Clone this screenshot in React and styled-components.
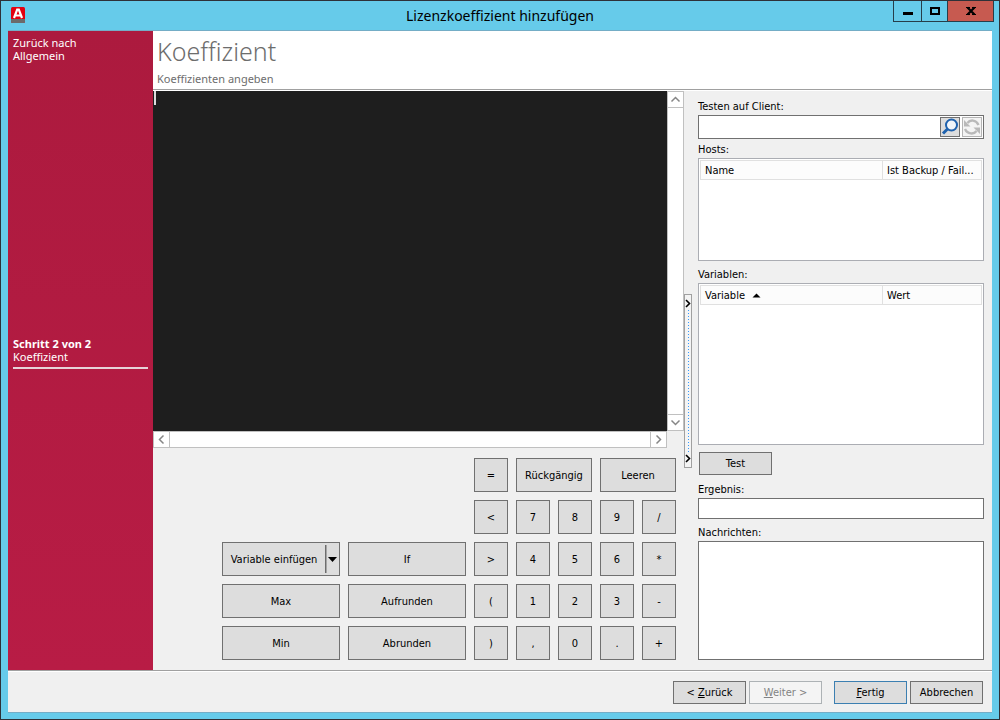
import React, { useState } from "react";
import styled, { createGlobalStyle, css } from "styled-components";

const keys = [
  { label: "=", col: 3, row: 1 },
  { label: "Rückgängig", col: 4, row: 1, span: 2 },
  { label: "Leeren", col: 6, row: 1, span: 2 },
  { label: "<", col: 3, row: 2 },
  { label: "7", col: 4, row: 2 },
  { label: "8", col: 5, row: 2 },
  { label: "9", col: 6, row: 2 },
  { label: "/", col: 7, row: 2 },
  { label: "If", col: 2, row: 3 },
  { label: ">", col: 3, row: 3 },
  { label: "4", col: 4, row: 3 },
  { label: "5", col: 5, row: 3 },
  { label: "6", col: 6, row: 3 },
  { label: "*", col: 7, row: 3 },
  { label: "Max", col: 1, row: 4 },
  { label: "Aufrunden", col: 2, row: 4 },
  { label: "(", col: 3, row: 4 },
  { label: "1", col: 4, row: 4 },
  { label: "2", col: 5, row: 4 },
  { label: "3", col: 6, row: 4 },
  { label: "-", col: 7, row: 4 },
  { label: "Min", col: 1, row: 5 },
  { label: "Abrunden", col: 2, row: 5 },
  { label: ")", col: 3, row: 5 },
  { label: ",", col: 4, row: 5 },
  { label: "0", col: 5, row: 5 },
  { label: ".", col: 6, row: 5 },
  { label: "+", col: 7, row: 5 },
];

const arrows = {
  up: "M4.5 10.5 L8.5 6.5 L12.5 10.5",
  down: "M4.5 6.5 L8.5 10.5 L12.5 6.5",
  left: "M10.5 4.5 L6.5 8.5 L10.5 12.5",
  right: "M6.5 4.5 L10.5 8.5 L6.5 12.5",
};

const Arrow = ({ dir }) => (
  <svg width="17" height="17" viewBox="0 0 17 17">
    <path d={arrows[dir]} fill="none" stroke="#868686" strokeWidth="1.5" />
  </svg>
);

const SplitArrow = () => (
  <svg width="6" height="9" viewBox="0 0 6 9">
    <path d="M1 1 L4.5 4.5 L1 8" fill="none" stroke="#000" strokeWidth="1.6" />
  </svg>
);

const App = () => {
  const [formula, setFormula] = useState("");
  const [client, setClient] = useState("");

  return (
    <>
      <GlobalStyle />
      <Window>
        <TitleBar>
          <Logo width="14" height="16" viewBox="0 0 14 16">
            <rect width="14" height="16" rx="1.5" fill="#e3000f" />
            <path d="M0 12h14v2.5a1.5 1.5 0 0 1-1.5 1.5h-11A1.5 1.5 0 0 1 0 14.5z" fill="#6b6b6b" />
            <path d="M3 11 L6.2 2.5 H7.8 L11 11 M4.3 8.5 H9.7" fill="none" stroke="#fff" strokeWidth="2.2" />
          </Logo>
          <Title>Lizenzkoeffizient hinzufügen</Title>
          <WindowButtons>
            <WindowButton $width={29} aria-label="Minimieren">
              <svg width="10" height="10" viewBox="0 0 10 10">
                <path d="M0 6h10v3H0z" />
              </svg>
            </WindowButton>
            <WindowButton $width={27} aria-label="Maximieren">
              <svg width="10" height="10" viewBox="0 0 10 10">
                <path d="M1 2h8v6H1z" fill="none" stroke="#000" strokeWidth="2" />
              </svg>
            </WindowButton>
            <WindowButton $width={47} $close aria-label="Schließen">
              <svg width="10" height="10" viewBox="0 0 10 10">
                <path d="M1.5 1.5 L8.5 8.500 M8.5 1.5 L1.5 8.500" fill="none" stroke="#000" strokeWidth="2.2" />
                <path d="M0 1.5h4M6 1.5h4M0 8.500h4M6 8.500h4" stroke="#000" strokeWidth="1" />
              </svg>
            </WindowButton>
          </WindowButtons>
        </TitleBar>

        <Dialog>
          <Body>
            <Sidebar>
              <BackLink href="#allgemein">
                Zurück nach
                <br />
                Allgemein
              </BackLink>
              <Step>
                <strong>Schritt 2 von 2</strong>
                <span>Koeffizient</span>
              </Step>
            </Sidebar>

            <Main>
              <Header>
                <h1>Koeffizient</h1>
                <p>Koeffizienten angeben</p>
              </Header>

              <Workspace>
                <Left>
                  <EditorRow>
                    <EditorBox>
                      <Editor
                        aria-label="Koeffizient"
                        value={formula}
                        onChange={(e) => setFormula(e.target.value)}
                      />
                      <Caret />
                    </EditorBox>
                    <VScroll>
                      <ScrollButton aria-label="Nach oben">
                        <Arrow dir="up" />
                      </ScrollButton>
                      <ScrollButton aria-label="Nach unten">
                        <Arrow dir="down" />
                      </ScrollButton>
                    </VScroll>
                  </EditorRow>
                  <HScroll>
                    <ScrollButton aria-label="Nach links">
                      <Arrow dir="left" />
                    </ScrollButton>
                    <ScrollButton aria-label="Nach rechts">
                      <Arrow dir="right" />
                    </ScrollButton>
                  </HScroll>

                  <Keypad>
                    <SplitKey $col={1} $row={3}>
                      <span>Variable einfügen</span>
                      <svg width="14" height="28" viewBox="0 0 14 28">
                        <path d="M0.5 0v28" stroke="#6d6d6d" />
                        <path d="M1.5 0v28" stroke="#a5a5a5" />
                        <path d="M3 12h9l-4.5 5z" />
                      </svg>
                    </SplitKey>
                    {keys.map((key) => (
                      <Key
                        key={key.label}
                        $col={key.col}
                        $row={key.row}
                        $span={key.span}
                      >
                        {key.label}
                      </Key>
                    ))}
                  </Keypad>
                </Left>

                <Splitter>
                  <SplitArrow />
                  <Dots />
                  <SplitArrow />
                </Splitter>

                <Right>
                  <Label htmlFor="client">Testen auf Client:</Label>
                  <SearchBox>
                    <input
                      id="client"
                      value={client}
                      onChange={(e) => setClient(e.target.value)}
                    />
                    <IconButton aria-label="Suchen">
                      <svg width="18" height="18" viewBox="0 0 18 18">
                        <circle cx="10.5" cy="7" r="5.5" fill="#f2f6fa" stroke="#1f62ae" strokeWidth="2" />
                        <path d="M6.5 11 L2 15.5" stroke="#1f62ae" strokeWidth="3" />
                      </svg>
                    </IconButton>
                    <IconButton aria-label="Aktualisieren" disabled>
                      <svg width="18" height="18" viewBox="0 0 18 18">
                        <g fill="none" stroke="#b9b9b9" strokeWidth="2.4">
                          <path d="M4.5 5 C7 1.5 13 1.5 15.5 7" />
                          <path d="M2 11 C4.5 16.5 11 16.5 13.5 13" />
                        </g>
                        <path d="M1 2v6.500h6.500zM17 16V9.500h-6.500z" fill="#b9b9b9" />
                      </svg>
                    </IconButton>
                  </SearchBox>

                  <Label as="div" id="hosts">Hosts:</Label>
                  <ListBox $height={103}>
                    <Table aria-labelledby="hosts">
                      <thead>
                        <tr>
                          <th>Name</th>
                          <th>Ist Backup / Fail...</th>
                        </tr>
                      </thead>
                    </Table>
                  </ListBox>

                  <Label as="div" id="variablen" $gap={3}>Variablen:</Label>
                  <ListBox $grow>
                    <Table aria-labelledby="variablen">
                      <thead>
                        <tr>
                          <th>
                            Variable
                            <svg width="9" height="5" viewBox="0 0 9 5">
                              <path d="M0.5 4.500 L4.500 0.5 L8.500 4.500z" />
                            </svg>
                          </th>
                          <th>Wert</th>
                        </tr>
                      </thead>
                    </Table>
                  </ListBox>

                  <TestButton>Test</TestButton>

                  <Label htmlFor="ergebnis" $gap={4}>Ergebnis:</Label>
                  <Result id="ergebnis" readOnly />

                  <Label htmlFor="nachrichten" $gap={3}>Nachrichten:</Label>
                  <Messages id="nachrichten" readOnly />
                </Right>
              </Workspace>
            </Main>
          </Body>

          <Footer>
            <Button>
              &lt;&nbsp;<u>Z</u>urück
            </Button>
            <Button disabled>
              <u>W</u>eiter&nbsp;&gt;
            </Button>
            <FinishButton>
              <u>F</u>ertig
            </FinishButton>
            <Button>Abbrechen</Button>
          </Footer>
        </Dialog>
      </Window>
    </>
  );
};

const uiFont = `"DejaVu Sans Condensed", "DejaVu Sans", Tahoma, sans-serif`;
const headFont = `"Noto Sans", "Segoe UI", sans-serif`;

const GlobalStyle = createGlobalStyle`
  * {
    box-sizing: border-box;
  }

  body {
    margin: 0;
    font: 11px/13px ${uiFont};
    color: #000;
  }

  button, input, textarea {
    margin: 0;
    padding: 0;
    border-radius: 0;
    font: inherit;
    color: inherit;
    outline: none;
  }

  svg {
    display: block;
    flex: none;
  }
`;

const Window = styled.div`
  display: flex;
  flex-direction: column;
  min-height: 100vh;
  padding: 0 7px 6px;
  border: 1px solid #2e3138;
  background: #66cbea;
`;

const TitleBar = styled.header`
  display: grid;
  grid-template-columns: 1fr auto 1fr;
  height: 29px;
  margin: 0 -2px;
`;

const Logo = styled.svg`
  margin: 6px 0 0 5px;
`;

const Title = styled.div`
  font: 14px/29px ${headFont};
`;

const WindowButtons = styled.div`
  display: flex;
  justify-self: end;
  height: 21px;
`;

const WindowButton = styled.button`
  display: flex;
  align-items: center;
  justify-content: center;
  width: ${(p) => p.$width}px;
  border: 1px solid #263e4a;
  border-top: 0;
  background: ${(p) => (p.$close ? "#c75a50" : "transparent")};

  & + & {
    margin-left: -1px;
  }
`;

const Dialog = styled.div`
  display: flex;
  flex-direction: column;
  flex: 1;
  border-top: 1px solid #74adc6;
  border-bottom: 1px solid #74adc6;
  background: #f0f0f0;
`;

const Body = styled.div`
  display: flex;
  flex: 1;
`;

const Sidebar = styled.nav`
  display: flex;
  flex-direction: column;
  width: 145px;
  padding: 5px 5px 26px;
  background: linear-gradient(#ac1a3e, #b81c45);
  color: #fff;
  font-family: ${headFont};
`;

const BackLink = styled.a`
  color: inherit;
  text-decoration: none;
`;

const Step = styled.div`
  display: flex;
  flex-direction: column;
  margin: auto 0;
  padding-bottom: 4px;
  border-bottom: 2px solid #e6d3d8;
`;

const Main = styled.main`
  display: flex;
  flex-direction: column;
  flex: 1;
  min-width: 0;
`;

const Header = styled.div`
  height: 60px;
  padding: 3px 4px 0;
  border-bottom: 1px solid #fff;
  background: #fff;
  box-shadow: inset 0 -1px #a0a0a0;
  color: #6d6d6d;
  font-family: ${headFont};

  h1 {
    margin: 0;
    font-size: 25px;
    font-weight: 300;
    line-height: 34px;
  }

  p {
    margin: 4px 0 0;
  }
`;

const Workspace = styled.div`
  display: flex;
  flex: 1;
`;

const Left = styled.section`
  display: flex;
  flex-direction: column;
  flex: 1;
`;

const EditorRow = styled.div`
  display: flex;
  flex: 1;
`;

const EditorBox = styled.div`
  position: relative;
  display: flex;
  flex: 1;
`;

const Editor = styled.textarea`
  flex: 1;
  border: 0;
  background: #1e1e1e;
  color: #dcdcdc;
  resize: none;
`;

const Caret = styled.i`
  position: absolute;
  top: 0;
  left: 1px;
  width: 2px;
  height: 14px;
  background: #dcdcdc;
`;

const ScrollButton = styled.button`
  width: 17px;
  height: 17px;
  border: 0;
  background: #fff;
`;

const VScroll = styled.div`
  display: flex;
  flex-direction: column;
  justify-content: space-between;
  width: 17px;
  background: #fff;
  box-shadow: inset 0 0 0 1px #c0c0c0;

  ${ScrollButton} {
    background: transparent;
    box-shadow: inset 0 0 0 1px #c0c0c0;
  }
`;

const HScroll = styled(VScroll)`
  flex-direction: row;
  width: auto;
  height: 17px;
  margin-right: 17px;
`;

const Keypad = styled.div`
  display: grid;
  grid-template-columns: 118px 118px repeat(5, 34px);
  grid-auto-rows: 34px;
  gap: 8px;
  justify-content: end;
  padding: 10px 8px;
`;

const Button = styled.button`
  width: 73px;
  height: 23px;
  border: 1px solid #707070;
  background: #ddd;

  &:disabled {
    border-color: #adb2b5;
    background: #f4f4f4;
    color: #838383;
  }
`;

const Key = styled(Button)`
  grid-column: ${(p) => p.$col} / span ${(p) => p.$span || 1};
  grid-row: ${(p) => p.$row};
  width: auto;
  height: auto;
`;

const SplitKey = styled(Key)`
  display: flex;
  align-items: center;

  span {
    flex: 1;
  }
`;

const Splitter = styled.div`
  display: flex;
  flex-direction: column;
  align-items: center;
  align-self: center;
  width: 8px;
  height: 174px;
  padding: 4px 0;
  border: 1px solid #a0a0a0;
  background: #f4f4f4;
`;

const Dots = styled.i`
  flex: 1;
  width: 1px;
  margin: 2px 0;
  background: repeating-linear-gradient(#3399ff 0 1px, transparent 1px 3px);
`;

const Right = styled.section`
  display: flex;
  flex-direction: column;
  width: 300px;
  padding: 5px 8px 10px 6px;
`;

const Label = styled.label`
  height: 19px;
  margin-top: ${(p) => p.$gap || 0}px;
  line-height: 22px;
`;

const box = css`
  border: 1px solid #707070;
  background: #fff;
`;

const SearchBox = styled.div`
  ${box}
  display: flex;
  align-items: center;
  gap: 2px;
  height: 24px;
  padding-right: 1px;

  input {
    flex: 1;
    min-width: 0;
    height: 20px;
    border: 0;
    background: transparent;
  }
`;

const IconButton = styled.button`
  width: 20px;
  height: 20px;
  border: 1px solid #707070;
  background: #ddd;

  &:disabled {
    border-color: #b5b5b5;
    background: #f4f4f4;
  }
`;

const ListBox = styled.div`
  height: ${(p) => (p.$grow ? "auto" : `${p.$height}px`)};
  flex: ${(p) => (p.$grow ? "1" : "none")};
  padding: 1px;
  border: 1px solid #abadb3;
  background: #fff;
`;

const Table = styled.table`
  width: 100%;
  table-layout: fixed;
  border-spacing: 0;

  th {
    height: 20px;
    padding: 0 4px;
    border: 1px solid #e0e0e0;
    background: #fcfcfc;
    font-weight: 400;
    text-align: left;
    white-space: nowrap;
  }

  th + th {
    width: 99px;
    border-left: 0;
  }

  svg {
    display: inline-block;
    margin-left: 7px;
    vertical-align: 1px;
  }
`;

const TestButton = styled(Button)`
  margin: 7px 0 0 1px;
`;

const Result = styled.input`
  ${box}
  height: 21px;
`;

const Messages = styled.textarea`
  ${box}
  height: 119px;
  resize: none;
`;

const Footer = styled.footer`
  display: flex;
  justify-content: flex-end;
  gap: 3px;
  padding: 10px 9px 8px;
  border-top: 1px solid #a0a0a0;
  box-shadow: inset 0 1px #fff;
`;

const FinishButton = styled(Button)`
  margin-left: 9px;
  border-color: #3c7fb1;
`;

export default App;
